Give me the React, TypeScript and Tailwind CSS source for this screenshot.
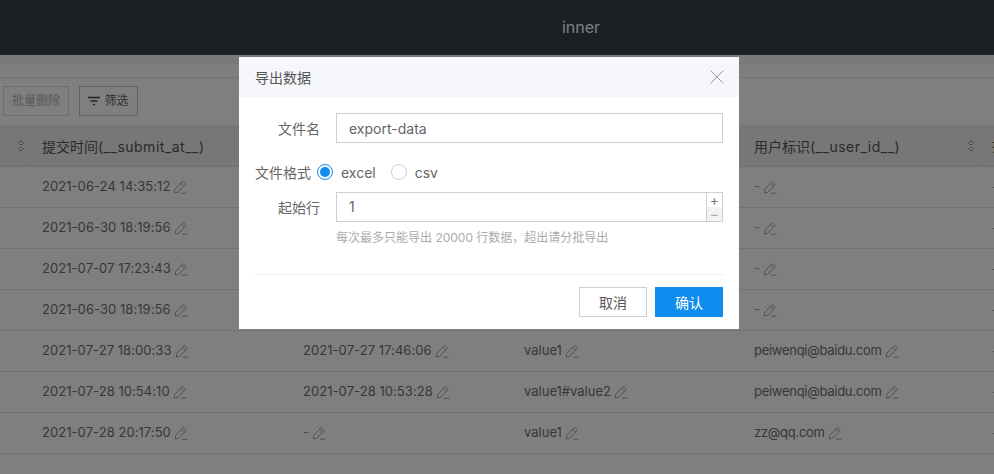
import { X } from 'lucide-react'

const FONT = 'font-["Inter","Noto_Sans_CJK_SC",sans-serif]'

type RowData = [string, string, string, string]

const rows: RowData[] = [
  ['2021-06-24 14:35:12', '2021-06-24 14:30:02', 'value1', '-'],
  ['2021-06-30 18:19:56', '2021-06-30 18:10:41', 'value1', '-'],
  ['2021-07-07 17:23:43', '2021-07-07 17:20:12', 'value2', '-'],
  ['2021-06-30 18:19:56', '2021-06-30 18:10:41', 'value1', '-'],
  ['2021-07-27 18:00:33', '2021-07-27 17:46:06', 'value1', 'peiwenqi@baidu.com'],
  ['2021-07-28 10:54:10', '2021-07-28 10:53:28', 'value1#value2', 'peiwenqi@baidu.com'],
  ['2021-07-28 20:17:50', '-', 'value1', 'zz@qq.com'],
]

const COLS = 'grid grid-cols-[31px_261px_221px_230px_239px_1fr]'

function Pencil() {
  return (
    <svg className="ml-[3px] h-[14px] w-[14px] shrink-0 text-[#9a9a9a]" viewBox="0 0 14 14" fill="none" stroke="currentColor" strokeWidth="0.9">
      <path d="M1.6 9.6 8.6 2.2a1.2 1.2 0 0 1 1.7 0l1.3 1.2a1.2 1.2 0 0 1 0 1.7L4.6 12.4 1.4 13z" />
      <path d="M7.6 3.3l3 2.9" />
      <path d="M8 13.2h5.6" />
    </svg>
  )
}

function SortIcon() {
  return (
    <svg className="h-[12px] w-[8px] text-[#999]" viewBox="0 0 8 12" fill="none" stroke="currentColor" strokeWidth="1">
      <path d="M1 3.6 4 .9l3 2.7" />
      <path d="M2.4 4.6h3.2" />
      <path d="M2.4 7.4h3.2" />
      <path d="M1 8.4l3 2.7 3-2.7" />
    </svg>
  )
}

function HeaderCell({ cn, en }: { cn: string; en: string }) {
  return (
    <div className="flex h-[41px] items-center justify-between overflow-hidden border-r border-[#e6e6e6] pl-[11px] pr-[6px] text-[14px] text-[#555]">
      <span className="mt-[1px] whitespace-nowrap">
        {cn}
        <span className="tracking-[0.5px]">{en}</span>
      </span>
      <SortIcon />
    </div>
  )
}

function Cell({ value, column }: { value: string; column: number }) {
  const spacing = column === 3 ? 'tracking-[-0.28px]' : column < 2 ? 'tracking-[0.06px]' : ''
  return (
    <div className={`flex items-center pl-[11px] text-[13px] ${spacing} ${value === '-' ? 'text-[#999]' : 'text-[#6f6f6f]'}`}>
      <span className="whitespace-nowrap">{value}</span>
      <Pencil />
    </div>
  )
}

function TableRows() {
  return (
    <>
      <div className={`${COLS} h-[42px] overflow-hidden border-b border-[#e4e4e4] bg-[#eeeeee]`}>
        <div className="flex items-center justify-end border-r border-[#e6e6e6] pr-[5px]">
          <SortIcon />
        </div>
        <HeaderCell cn="提交时间" en="(__submit_at__)" />
        <HeaderCell cn="更新时间" en="(__update_at__)" />
        <HeaderCell cn="字段" en="(__field__)" />
        <HeaderCell cn="用户标识" en="(__user_id__)" />
        <div className="overflow-hidden whitespace-nowrap pl-[10px] text-[14px] leading-[41px] text-[#555]">操作</div>
      </div>
      {rows.map((row, i) => (
        <div key={i} className={`${COLS} h-[41px] border-b border-[#e4e4e4]`}>
          <div />
          {row.map((value, j) => (
            <Cell key={j} value={value} column={j} />
          ))}
          <div className="overflow-hidden pl-[10px] text-[13px] leading-[40px] text-[#999]">-</div>
        </div>
      ))}
    </>
  )
}

export default function App() {
  return (
    <div className={`relative h-[474px] w-[994px] overflow-hidden bg-white ${FONT}`}>
      <div className="flex h-[55px] items-center justify-center bg-[#343e48] text-[16px]">
        <span className="mb-[2px] ml-[168px] text-white">inner</span>
      </div>
      <div className="h-[10px] bg-[#f4f4f4]" />
      <div className="h-[13px] border-b border-[#e8e8e8] bg-white" />
      <div className="flex h-[47px] items-start gap-[10px] pl-[3px] pt-[8px]">
        <button className="h-[30px] w-[66px] border border-[#d8d8d8] text-[12px] text-[#b0b0b0]">批量删除</button>
        <button className="flex h-[30px] w-[59px] items-center justify-center gap-[4px] border border-[#c0c0c0] text-[12px] text-[#666]">
          <svg className="h-[10px] w-[12px]" viewBox="0 0 12 10" fill="none" stroke="#444" strokeWidth="1.3">
            <path d="M0 1.5h12M2.5 5h7M5 8.5h2" />
          </svg>
          筛选
        </button>
      </div>
      <TableRows />

      <div className="absolute inset-0 bg-black/50 pl-[239px] pt-[57px]">
        <div className="flex h-[272px] w-[500px] flex-col bg-white">
          <div className="flex h-[40px] items-center justify-between bg-[#f5f7fb] pl-[16px] pr-[10px] text-[14px] text-[#555]">
            <span>导出数据</span>
            <X className="h-6 w-6 text-[#999]" strokeWidth={1} />
          </div>
          <div className="flex flex-1 flex-col px-[16px] pt-[16px]">
            <div className="flex h-[30px] items-center">
              <label className="w-[65px] text-right text-[14px] text-[#666]">文件名</label>
              <input
                readOnly
                value="export-data"
                className="ml-[16px] h-[30px] w-[387px] border border-[#cfcfcf] px-[12px] text-[14px] text-[#666] outline-none"
              />
            </div>
            <div className="mt-[19px] flex h-[20px] items-center text-[14px] text-[#666]">
              <label className="w-[56px] whitespace-nowrap text-right">文件格式</label>
              <span className="ml-[6px] flex h-[16px] w-[16px] items-center justify-center rounded-full border border-[#108cee]">
                <span className="h-[10px] w-[10px] rounded-full bg-[#108cee]" />
              </span>
              <span className="ml-[8px]">excel</span>
              <span className="ml-[15px] h-[16px] w-[16px] rounded-full border border-[#cfcfcf]" />
              <span className="ml-[8px]">csv</span>
            </div>
            <div className="mt-[10px] flex h-[30px] items-center">
              <label className="w-[65px] text-right text-[14px] text-[#666]">起始行</label>
              <div className="ml-[16px] flex h-[30px] w-[387px] border border-[#cfcfcf]">
                <span className="flex-1 pl-[12px] text-[14px] leading-[28px] text-[#666]">1</span>
                <div className="flex w-[16px] flex-col border-l border-[#cfcfcf] text-[#777]">
                  <span className="flex flex-1 items-center justify-center text-[14px] leading-none">+</span>
                  <span className="flex flex-1 items-center justify-center bg-[#f3f3f3] text-[14px] leading-none text-[#aaa]">−</span>
                </div>
              </div>
            </div>
            <p className="ml-[81px] mt-[8px] text-[12px] leading-[16px] text-[#aaa]">每次最多只能导出 20000 行数据，超出请分批导出</p>
            <div className="mt-[28px] flex justify-end gap-[8px] border-t border-[#eeeeee] pt-[12px]">
              <button className="h-[30px] w-[68px] border border-[#cfcfcf] text-[14px] text-[#555]">取消</button>
              <button className="h-[30px] w-[68px] bg-[#108cee] text-[14px] text-white">确认</button>
            </div>
          </div>
        </div>
      </div>
    </div>
  )
}
